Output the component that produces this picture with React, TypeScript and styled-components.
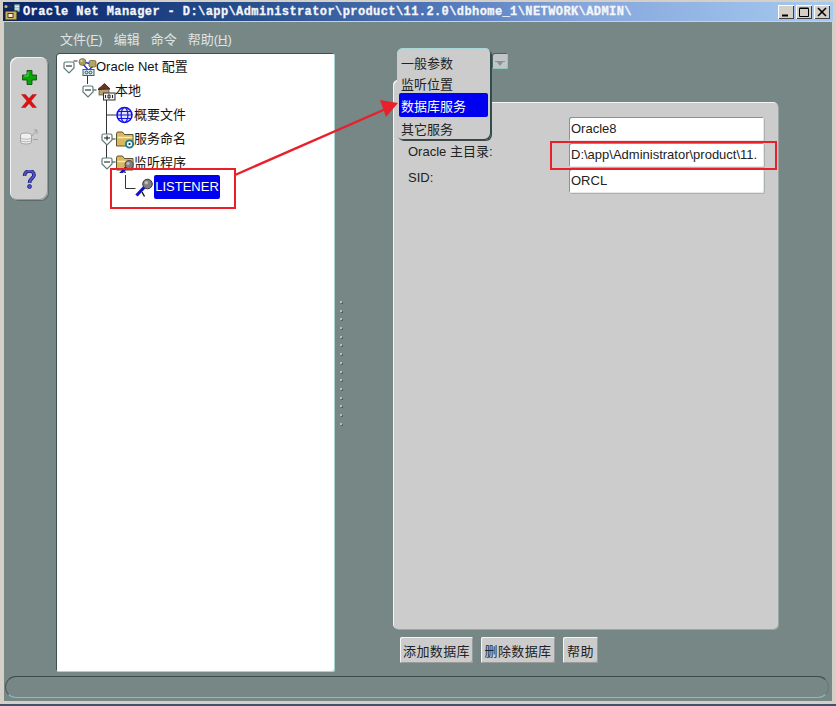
import React from "react";
import styled, { createGlobalStyle } from "styled-components";

const Global = createGlobalStyle`
  html, body { margin: 0; padding: 0; background: #778786; }
  body { font-family: "Liberation Sans", "Noto Sans CJK SC", sans-serif; font-size: 13px; color: #222; }
`;

const Window = styled.div`
  position: relative;
  width: 836px;
  height: 706px;
  box-sizing: border-box;
  display: flex;
  flex-direction: column;
  padding: 2px 3px 3px 3px;
  background: #d4d0c8;
  border-bottom: 2px solid #44506a;
  overflow: hidden;
`;
const TitleBar = styled.div`
  height: 19px;
  flex: none;
  display: flex;
  align-items: center;
  background: linear-gradient(90deg, #0a246a 0%, #27508f 30%, #4f76b8 52%, #86a6dc 70%, #a6caf0 100%);
  padding-right: 3px;
`;
const TitleIcon = styled.svg`
  width: 18px;
  height: 18px;
  flex: none;
  margin-right: 2px;
`;
const TitleText = styled.div`
  flex: 1;
  font-family: "Liberation Mono", monospace;
  font-weight: 700;
  font-size: 12px;
  letter-spacing: 0.41px;
  color: #f4f6fa;
  -webkit-text-stroke: 0.3px #f4f6fa;
  white-space: nowrap;
`;
const CaptionGroup = styled.div`
  display: flex;
  gap: 2px;
`;
const CaptionButton = styled.div`
  width: 16px;
  height: 14px;
  background: #d4d0c8;
  box-shadow: inset 1px 1px 0 #fff, inset -1px -1px 0 #404040;
  display: flex;
  align-items: center;
  justify-content: center;
`;
const Body = styled.div`
  flex: 1;
  margin: 1px 1px 0 1px;
  min-height: 0;
  display: flex;
  flex-direction: column;
  background: #778786;
`;
const MenuBar = styled.div`
  height: 31px;
  flex: none;
  box-sizing: border-box;
  padding: 10px 0 0 56px;
  display: flex;
  gap: 11px;
  color: #dfe4e4;
  font-size: 13px;
  line-height: 16px;
`;
const Mnemonic = styled.span`
  text-decoration: underline;
`;
const Main = styled.div`
  height: 619px;
  flex: none;
  display: flex;
  align-items: flex-start;
`;
const Toolbar = styled.div`
  width: 38px;
  height: 143px;
  flex: none;
  margin: 4px 8px 0 6px;
  box-sizing: border-box;
  padding-top: 9px;
  background: #cccccc;
  border-radius: 8px;
  box-shadow: inset 1px 1px 0 #f2f2f2, inset -1px -1px 0 #8f9a99, 1px 1px 0 #5d6b6b;
  display: flex;
  flex-direction: column;
  align-items: center;
`;
const ToolSlot = styled.div<{ $h: number }>`
  height: ${(p) => p.$h}px;
  flex: none;
  display: flex;
  align-items: center;
  justify-content: center;
`;
const TreePanel = styled.div`
  position: relative;
  width: 279px;
  height: 619px;
  flex: none;
  box-sizing: border-box;
  padding: 2px 0 0 1px;
  background: #fff;
  border-radius: 3px;
  box-shadow: inset 1px 1px 0 #3f4f4f, inset -1px -1px 0 #a9d3d3;
`;
const TreeRow = styled.div<{ $depth: number }>`
  position: relative;
  height: 24px;
  display: flex;
  align-items: center;
  padding-left: ${(p) => 6 + p.$depth * 19}px;
  color: #111;
  white-space: nowrap;
`;
const Slot = styled.div`
  width: 15px;
  flex: none;
  display: flex;
  align-items: center;
`;
const NodeIcon = styled.svg`
  width: 19px;
  height: 19px;
  flex: none;
`;
const NodeLabel = styled.span`
  font-size: 13px;
  line-height: 16px;
  margin-left: -1px;
`;
const SelectedLabel = styled(NodeLabel)`
  margin-left: 0;
  background: #0000f0;
  color: #fff;
  border-radius: 2px;
  padding: 4px 1px;
  width: 66px;
  box-sizing: border-box;
  text-align: center;
`;
const TreeLines = styled.svg`
  position: absolute;
  left: 0;
  top: 0;
  width: 279px;
  height: 170px;
  pointer-events: none;
`;
const Splitter = styled.div`
  width: 58px;
  height: 619px;
  flex: none;
  box-sizing: border-box;
  padding: 248px 0 0 5px;
  display: flex;
  flex-direction: column;
  gap: 6.7px;
`;
const GripDot = styled.div`
  width: 2px;
  height: 2px;
  background: #b4bebe;
  box-shadow: 1px 1px 0 #556262;
`;
const RightColumn = styled.div`
  position: relative;
  width: 385px;
  flex: none;
  padding-top: 49px;
`;
const Panel = styled.div`
  position: relative;
  height: 527px;
  box-sizing: border-box;
  padding: 15px 0 0 15px;
  background: #cccccc;
  border-radius: 5px;
  box-shadow: inset 1px 1px 0 #f4f4f4, 1px 1px 0 #9aa5a4;
  display: flex;
  flex-direction: column;
  gap: 2px;
  &::before {
    content: "";
    position: absolute;
    left: 0;
    top: -22px;
    width: 90px;
    height: 24px;
    background: #cccccc;
    border-radius: 5px 5px 0 0;
    box-shadow: inset 1px 1px 0 #f4f4f4;
  }
`;
const FormRow = styled.div`
  position: relative;
  display: flex;
  align-items: center;
`;
const FieldLabel = styled.div`
  width: 161px;
  flex: none;
  padding-bottom: 7px;
  font-size: 13px;
  line-height: 16px;
  color: #222;
`;
const Field = styled.div`
  width: 195px;
  height: 24px;
  box-sizing: border-box;
  padding: 1px 0 0 2px;
  background: #fff;
  font-size: 13px;
  line-height: 22px;
  color: #222;
  white-space: nowrap;
  overflow: hidden;
  border-radius: 2px;
  box-shadow: inset 1px 1px 0 #5fa3a3, inset -1px -1px 0 #e8e8e8, 1px 1px 0 #aab0b0;
`;
const ButtonRow = styled.div`
  display: flex;
  gap: 8px;
  margin: 8px 0 0 7px;
`;
const Button = styled.div<{ $w: number }>`
  width: ${(p) => p.$w}px;
  height: 26px;
  box-sizing: border-box;
  display: flex;
  align-items: center;
  justify-content: center;
  background: #cccccc;
  border-radius: 2px;
  box-shadow: inset 1px 1px 0 #f4f4f4, inset -1px -1px 0 #9b9b9b;
  font-size: 13px;
  letter-spacing: 0.4px;
  color: #222;
`;
const Popup = styled.div`
  position: absolute;
  left: 4px;
  top: -5px;
  width: 94px;
  height: 92px;
  box-sizing: border-box;
  padding: 3px 2px 0;
  background: #cccccc;
  border-radius: 6px;
  box-shadow: inset 1px 1px 0 #a8d8d8, inset -1px -1px 0 #2f4a4a, 1px 1px 0 #3c4a4a;
  display: flex;
  flex-direction: column;
  z-index: 2;
`;
const PopupItem = styled.div<{ $active?: boolean }>`
  height: ${(p) => (p.$active ? 24 : 21)}px;
  flex: none;
  width: 89px;
  box-sizing: border-box;
  padding: ${(p) => (p.$active ? "0" : "1px")} 0 0 2px;
  display: flex;
  align-items: center;
  font-size: 13px;
  border-radius: 2px;
  background: ${(p) => (p.$active ? "#0000f0" : "transparent")};
  color: ${(p) => (p.$active ? "#fff" : "#222")};
`;
const DropButton = styled.div`
  position: absolute;
  left: 99px;
  top: 0;
  width: 16px;
  height: 16px;
  background: #c2c6c6;
  border-radius: 2px;
  box-shadow: inset 1px 1px 0 #4f6262, inset -1px -1px 0 #8fc6c6;
  display: flex;
  align-items: flex-end;
  justify-content: center;
  padding-bottom: 3px;
  box-sizing: border-box;
  z-index: 1;
`;
const StatusBar = styled.div`
  height: 22px;
  flex: none;
  margin: 4px 3px 0 1px;
  box-sizing: border-box;
  border-radius: 11px;
  border-top: 1px solid #3b4b4b;
  border-left: 1px solid #4a5a5a;
  border-right: 1px solid #5f7d7d;
  border-bottom: 1px solid #86bcbc;
`;
const Annotations = styled.svg`
  position: absolute;
  left: 0;
  top: 0;
  width: 836px;
  height: 706px;
  pointer-events: none;
  z-index: 5;
`;

const Expander = ({ plus }: { plus?: boolean }) => (
  <svg width="12" height="13" viewBox="0 0 12 13">
    <path d="M1 2.500Q1 1 2.500 1h7Q11 1 11 2.500v4.500l-5 5-5-5z" fill="#fff" stroke="#5b7a7a" strokeWidth="1.200" />
    <path d="M3 5h6" stroke="#111" />
    {plus && <path d="M6 2.500v5" stroke="#111" />}
  </svg>
);

const NetIcon = () => (
  <NodeIcon viewBox="0 0 19 19">
    <path d="M5 6l6 7M15 8l-5 5M5 4l9 2" stroke="#2030e0" strokeWidth="1.500" />
    <circle cx="4.500" cy="4" r="3.500" fill="#a89a5a" stroke="#5c5530" strokeWidth="0.600" />
    <circle cx="3.500" cy="3" r="1.200" fill="#d8cf98" />
    <rect x="11" y="2.500" width="7" height="6.500" rx="1.500" fill="#b5a565" stroke="#5c5530" strokeWidth="0.700" />
    <rect x="5" y="11.500" width="11" height="6" fill="#dfeaea" stroke="#3b6565" />
    <circle cx="8.500" cy="14.500" r="1.400" fill="none" stroke="#1e5a6a" />
    <circle cx="12.500" cy="14.500" r="1.400" fill="none" stroke="#1e5a6a" />
  </NodeIcon>
);
const HomeIcon = () => (
  <NodeIcon viewBox="0 0 19 19">
    <rect x="2" y="6" width="10" height="7" fill="#b3a070" stroke="#5c4c28" strokeWidth="0.700" />
    <path d="M1 7.500L7.500 1.500 13 7z" fill="#6e3428" stroke="#3a1c16" strokeWidth="0.800" />
    <rect x="6.500" y="11" width="11.500" height="7" fill="#f0f0f0" stroke="#333" />
    <path d="M8.500 13v3M11 13h2v3h-2zM15.500 13v3" stroke="#222" fill="none" />
  </NodeIcon>
);
const GlobeIcon = () => (
  <NodeIcon viewBox="0 0 19 19">
    <circle cx="8.500" cy="9" r="7.500" fill="#e4e4ff" stroke="#1010e8" strokeWidth="1.600" />
    <ellipse cx="8.500" cy="9" rx="3.400" ry="7.500" fill="none" stroke="#1010e8" strokeWidth="1.200" />
    <path d="M2 5.500h13M1 9h15M2 12.500h13" stroke="#1010e8" strokeWidth="1.200" />
  </NodeIcon>
);
const FolderBase = () => (
  <>
    <path d="M.5 3.500Q.5 2 2 2h4.500l2 2.500H17v11.500H.500z" fill="#d9b862" stroke="#5f5228" />
    <path d="M1.500 7.500h15" stroke="#f6e9b8" strokeWidth="1.500" />
  </>
);
const FolderGearIcon = () => (
  <NodeIcon viewBox="0 0 19 19">
    <FolderBase />
    <circle cx="13.500" cy="14" r="3.600" fill="#fff" stroke="#127a8c" strokeWidth="1.800" />
    <circle cx="13.500" cy="14" r="1.100" fill="#222" />
  </NodeIcon>
);
const MicShape = () => (
  <>
    <path d="M1.500 17.500L9.500 9" stroke="#1010d0" strokeWidth="3.200" />
    <path d="M7 14l2.500 4.500" stroke="#111" strokeWidth="1.400" />
    <circle cx="12.500" cy="6" r="4.800" fill="#7f7f7f" stroke="#3a3a3a" />
    <circle cx="11.300" cy="4.800" r="1.800" fill="#bdbdbd" />
  </>
);
const FolderMicIcon = () => (
  <NodeIcon viewBox="0 0 19 19">
    <FolderBase />
    <g transform="translate(2.500 5.500) scale(0.85)">
      <MicShape />
    </g>
  </NodeIcon>
);
const MicIcon = () => (
  <NodeIcon viewBox="0 0 19 19">
    <MicShape />
  </NodeIcon>
);

const dots = Array.from({ length: 15 });

export default function App() {
  return (
    <>
      <Global />
      <Window>
        <TitleBar>
          <TitleIcon viewBox="0 0 18 18">
            <rect x="1" y="2" width="8" height="3" fill="#20303a" />
            <circle cx="3" cy="3.500" r="1.500" fill="#c8b878" />
            <rect x="11" y="1" width="6" height="8" fill="#8fc4d4" stroke="#1a3040" strokeWidth="0.800" />
            <path d="M12 3.500h4M12 6h4" stroke="#eaf4f8" />
            <rect x="2" y="8" width="12" height="9" fill="#c8b060" stroke="#20201a" />
            <rect x="5" y="10.500" width="5" height="4" fill="#f4f0d8" stroke="#20201a" strokeWidth="0.800" />
          </TitleIcon>
          <TitleText>{"Oracle Net Manager - D:\\app\\Administrator\\product\\11.2.0\\dbhome_1\\NETWORK\\ADMIN\\"}</TitleText>
          <CaptionGroup>
            <CaptionButton>
              <svg width="10" height="10" viewBox="0 0 10 10"><path d="M1 8.500h6" stroke="#000" strokeWidth="2" /></svg>
            </CaptionButton>
            <CaptionButton>
              <svg width="10" height="10" viewBox="0 0 10 10"><path d="M.5 1.500h9v8h-9zM.5 1h9" fill="none" stroke="#000" /></svg>
            </CaptionButton>
            <CaptionButton>
              <svg width="10" height="10" viewBox="0 0 10 10"><path d="M1 1l8 8M9 1L1 9" stroke="#000" strokeWidth="1.600" /></svg>
            </CaptionButton>
          </CaptionGroup>
        </TitleBar>
        <Body>
          <MenuBar>
            <span>文件(<Mnemonic>F</Mnemonic>)</span>
            <span>编辑</span>
            <span>命令</span>
            <span>帮助(<Mnemonic>H</Mnemonic>)</span>
          </MenuBar>
          <Main>
            <Toolbar>
              <ToolSlot $h={22}>
                <svg width="15" height="15" viewBox="0 0 15 15">
                  <path d="M5 .5h5v4.500h4.500v5H10v4.500H5V10H.5V5H5z" fill="#08a408" stroke="#054a05" strokeWidth="0.800" />
                  <path d="M6 2v4H2" stroke="#4fe04f" fill="none" />
                </svg>
              </ToolSlot>
              <ToolSlot $h={26}>
                <svg width="16" height="14" viewBox="0 0 16 14">
                  <path d="M.5.5h4L8 4.500 11.500.5h4L10 7l5.500 6.500h-4L8 9.500 4.500 13.500h-4L6 7z" fill="#e01010" stroke="#900a0a" strokeWidth="0.400" />
                </svg>
              </ToolSlot>
              <ToolSlot $h={46}>
                <svg width="20" height="18" viewBox="0 0 20 18">
                  <ellipse cx="7" cy="7" rx="5.500" ry="2" fill="#efefef" stroke="#a4a4a4" />
                  <path d="M1.500 7v7c0 1.200 2.500 2 5.500 2s5.500-.8 5.500-2V7" fill="#efefef" stroke="#a4a4a4" />
                  <path d="M2 10.500c2 1 8 1 10 0M2 13c2 1 8 1 10 0" stroke="#b8b8b8" fill="none" />
                  <path d="M14 11.500h5M13 8l5-6M18 2v4M18 2h-3" stroke="#a3a3a3" fill="none" />
                </svg>
              </ToolSlot>
              <ToolSlot $h={38}>
                <svg width="14" height="19" viewBox="0 0 14 19">
                  <path d="M2.500 6C2.500-.5 12-.5 12 5c0 3.500-4.500 3.500-4.500 8" fill="none" stroke="#17174f" strokeWidth="3.600" />
                  <path d="M2.500 6C2.500-.5 12-.5 12 5c0 3.500-4.500 3.500-4.500 8" fill="none" stroke="#4f4fd8" strokeWidth="2.200" />
                  <circle cx="7.500" cy="16.500" r="2" fill="#4f4fd8" stroke="#17174f" strokeWidth="0.700" />
                </svg>
              </ToolSlot>
            </Toolbar>
            <TreePanel>
              <TreeLines viewBox="0 0 279 170">
                <path
                  d="M17.500 8h4M31.500 20v11M36.500 37h4M50.500 44v72M50.500 62h10M55.500 86h4M55.500 109h4M69.500 122v13.500h10"
                  stroke="#333"
                  fill="none"
                />
              </TreeLines>
              <TreeRow $depth={0}>
                <Slot><Expander /></Slot>
                <NetIcon />
                <NodeLabel>Oracle Net 配置</NodeLabel>
              </TreeRow>
              <TreeRow $depth={1}>
                <Slot><Expander /></Slot>
                <HomeIcon />
                <NodeLabel>本地</NodeLabel>
              </TreeRow>
              <TreeRow $depth={2}>
                <Slot />
                <GlobeIcon />
                <NodeLabel>概要文件</NodeLabel>
              </TreeRow>
              <TreeRow $depth={2}>
                <Slot><Expander plus /></Slot>
                <FolderGearIcon />
                <NodeLabel>服务命名</NodeLabel>
              </TreeRow>
              <TreeRow $depth={2}>
                <Slot><Expander /></Slot>
                <FolderMicIcon />
                <NodeLabel>监听程序</NodeLabel>
              </TreeRow>
              <TreeRow $depth={3}>
                <Slot />
                <MicIcon />
                <SelectedLabel>LISTENER</SelectedLabel>
              </TreeRow>
            </TreePanel>
            <Splitter>
              {dots.map((_, i) => (
                <GripDot key={i} />
              ))}
            </Splitter>
            <RightColumn>
              <Popup>
                <PopupItem>一般参数</PopupItem>
                <PopupItem>监听位置</PopupItem>
                <PopupItem $active>数据库服务</PopupItem>
                <PopupItem>其它服务</PopupItem>
              </Popup>
              <DropButton>
                <svg width="10" height="5" viewBox="0 0 10 5"><path d="M0 0h10v1H8L5 5 2 1H0z" fill="#8b9292" /></svg>
              </DropButton>
              <Panel>
                <FormRow>
                  <FieldLabel />
                  <Field>Oracle8</Field>
                </FormRow>
                <FormRow>
                  <FieldLabel>Oracle 主目录:</FieldLabel>
                  <Field>{"D:\\app\\Administrator\\product\\11."}</Field>
                </FormRow>
                <FormRow>
                  <FieldLabel>SID:</FieldLabel>
                  <Field>ORCL</Field>
                </FormRow>
              </Panel>
              <ButtonRow>
                <Button $w={73}>添加数据库</Button>
                <Button $w={74}>删除数据库</Button>
                <Button $w={35}>帮助</Button>
              </ButtonRow>
            </RightColumn>
          </Main>
          <StatusBar />
        </Body>
        <Annotations viewBox="0 0 836 706">
          <rect x="111" y="169" width="124" height="39" fill="none" stroke="#e8202c" strokeWidth="2" />
          <rect x="551" y="142" width="225" height="27" fill="none" stroke="#e8202c" strokeWidth="2" />
          <path d="M235 175L388 108" stroke="#e8202c" strokeWidth="2.400" fill="none" />
          <path d="M398 103L380 100L386 117z" fill="#e8202c" />
        </Annotations>
      </Window>
    </>
  );
}
